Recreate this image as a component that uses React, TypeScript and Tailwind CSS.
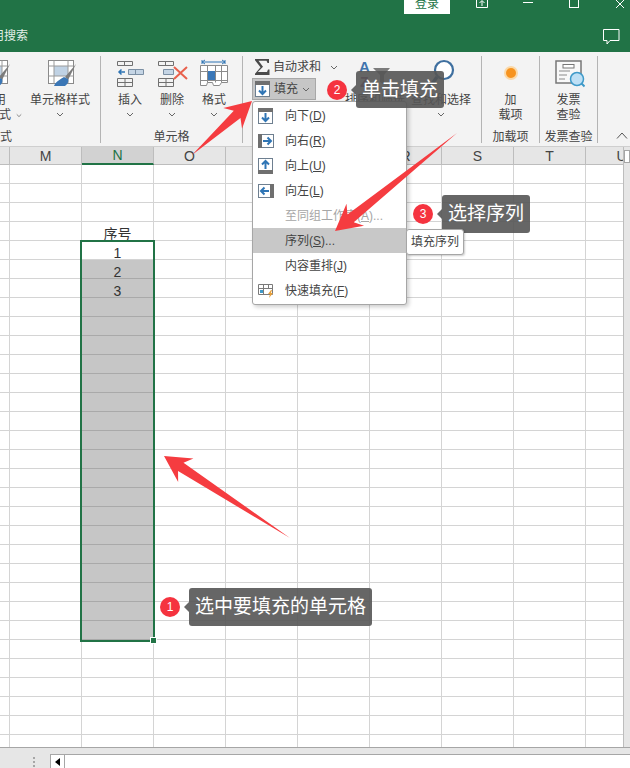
import React from 'react';

const columns = ['', 'M', 'N', 'O', 'P', 'Q', 'R', 'S', 'T', 'U'];
const rows = Array.from({ length: 31 }, (_, i) => i);

const cellText: Record<number, string> = { 3: '序号', 4: '1', 5: '2', 6: '3' };

const Chevron: React.FC = () => (
  <svg width="8" height="5" viewBox="0 0 8 5" fill="none" stroke="#666" strokeWidth="1">
    <path d="M1 1l3 3 3-3" />
  </svg>
);

const CellStyleIcon: React.FC = () => (
  <svg width="32" height="32" viewBox="0 0 32 32" className="shrink-0" fill="none">
    <rect x="4.5" y="2.5" width="25" height="23" fill="#fff" stroke="#8a8a8a" />
    <rect x="10" y="8" width="14" height="10" fill="#c0d2e4" />
    <path d="M4.5 8h25M4.5 18h25M10 2.5v23M24 2.5v23" stroke="#9a9a9a" />
    <path d="M32 6l-11 13 3 3z" fill="#7c7c7c" />
    <path d="M20 19c-3 2-8 4-10 9h11c3-2 4-5 3-7z" fill="#3a76b5" />
  </svg>
);

const InsertIcon: React.FC = () => (
  <svg width="32" height="32" viewBox="0 0 32 32" fill="none" stroke="#707070">
    <path d="M3.5 3.5h15v4h-15zM10.5 3.5v4M3.5 20.5h15v8h-15zM11 20.5v8M3.5 24.5h15" />
    <path d="M14.5 11.5h15v5h-15zM21.5 11.5v5" fill="#c5d5e5" stroke="#7b8fa3" />
    <path d="M11 14H5M7.500 11.500L5 14l2.500 2.500" stroke="#2f75b5" strokeWidth="1.500" />
  </svg>
);

const DeleteIcon: React.FC = () => (
  <svg width="32" height="32" viewBox="0 0 32 32" fill="none" stroke="#707070">
    <path d="M2.500 3.500h15v4h-15zM9.500 3.500v4M2.500 20.500h15v8h-15zM10 20.500v8M2.500 24.500h15" />
    <path d="M7.500 11.500h10v5h-10z" fill="#c5d5e5" stroke="#7b8fa3" />
    <path d="M18 9l13 12M31 9L18 21" stroke="#e8604c" strokeWidth="2" />
  </svg>
);

const FormatIcon: React.FC = () => (
  <svg width="32" height="32" viewBox="0 0 32 32" fill="none" stroke="#8a8a8a">
    <path d="M4 4h23M4 2v4M27 2v4" stroke="#2f75b5" />
    <path d="M7 2l-3 2 3 2M24 2l3 2-3 2" stroke="#2f75b5" />
    <path d="M2.500 7.500h27v17h-6l-2 3h-6l-1-3h-5l-1 3h-6z" fill="#fff" />
    <path d="M2.500 13.500h27M2.500 22.500h27M9.500 7.500v17M17.500 7.500v17M23.500 7.500v17" />
    <rect x="10" y="13" width="7" height="9" fill="#3b78b8" stroke="none" />
  </svg>
);

const SigmaIcon: React.FC = () => (
  <svg width="16" height="16" viewBox="0 0 16 16" fill="#4a4a4a">
    <path d="M1 0h14v4h-1.500l-1-2.300H4.500L9 7.800 3.800 13H13l1-2.500h1.500V16H1v-1.200L6.500 8.200 1 1.200z" />
  </svg>
);

const FillDownIcon: React.FC = () => (
  <svg width="16" height="16" viewBox="0 0 16 16" fill="none" className="shrink-0">
    <rect x="0.500" y="0.500" width="14" height="15" fill="#fff" stroke="#6e7f90" />
    <rect x="0" y="0" width="15" height="4" fill="#6f6f6f" />
    <path d="M7.500 5v8M4 9.500L7.500 13 11 9.500" stroke="#2f75b5" strokeWidth="2" />
  </svg>
);

const FillRightIcon: React.FC = () => (
  <svg width="16" height="16" viewBox="0 0 16 16" fill="none">
    <rect x="0.500" y="1.500" width="15" height="13" fill="#fff" stroke="#6e7f90" />
    <rect x="0" y="1" width="4" height="14" fill="#6f6f6f" />
    <path d="M5 8h8M9.500 4.500L13 8l-3.500 3.500" stroke="#2f75b5" strokeWidth="2" />
  </svg>
);

const FillUpIcon: React.FC = () => (
  <svg width="16" height="16" viewBox="0 0 16 16" fill="none">
    <rect x="0.500" y="0.500" width="14" height="15" fill="#fff" stroke="#6e7f90" />
    <rect x="0" y="12" width="15" height="4" fill="#6f6f6f" />
    <path d="M7.500 11V3M4 6.500L7.500 3 11 6.500" stroke="#2f75b5" strokeWidth="2" />
  </svg>
);

const FillLeftIcon: React.FC = () => (
  <svg width="16" height="16" viewBox="0 0 16 16" fill="none">
    <rect x="0.500" y="1.500" width="15" height="13" fill="#fff" stroke="#6e7f90" />
    <rect x="12" y="1" width="4" height="14" fill="#6f6f6f" />
    <path d="M11 8H3M6.500 4.500L3 8l3.500 3.500" stroke="#2f75b5" strokeWidth="2" />
  </svg>
);

const FlashFillIcon: React.FC = () => (
  <svg width="16" height="16" viewBox="0 0 16 16" fill="none" stroke="#7a7a7a">
    <path d="M0.500 1.500h14v10h-14zM0.500 5.500h14M5.500 1.500v10M10.500 1.500v4" />
    <rect x="2" y="7" width="3" height="3" fill="#3f9ac9" stroke="none" />
    <path d="M13 7l-3 4h2l-1 4 4-5h-2l1-3z" fill="#e9a13b" stroke="none" />
  </svg>
);

const SortIcon: React.FC = () => (
  <svg width="32" height="32" viewBox="0 0 32 32" className="shrink-0">
    <text x="0" y="14" fontSize="15" fontWeight="700" fill="#3f74ad" fontFamily="Liberation Sans">A</text>
    <text x="1" y="29" fontSize="14" fontWeight="700" fill="#7a3b6f" fontFamily="Liberation Sans">Z</text>
    <path d="M14 10h17l-6 7v9l-4-2v-7z" fill="#7b7b7b" />
  </svg>
);

const SearchIcon: React.FC = () => (
  <svg width="32" height="32" viewBox="0 0 32 32" fill="none" className="shrink-0">
    <circle cx="19" cy="12" r="9" fill="#fff" stroke="#3e6f9f" strokeWidth="2.200" />
    <path d="M12 19L4 30" stroke="#2b5c8f" strokeWidth="3.500" />
  </svg>
);

const InvoiceIcon: React.FC = () => (
  <svg width="32" height="32" viewBox="0 0 32 32" fill="none" className="shrink-0">
    <rect x="3" y="3" width="25" height="22" fill="#f8f8f8" stroke="#777" strokeWidth="1.500" />
    <rect x="10" y="6.500" width="11" height="3.500" fill="#fff" stroke="#777" />
    <path d="M6 13h11M6 17h8M6 21h6" stroke="#8a8a8a" />
    <circle cx="24" cy="21" r="6.500" fill="#bfe0f5" stroke="#3f9ac9" strokeWidth="1.500" />
    <path d="M28.500 25.500l3 3" stroke="#3f9ac9" strokeWidth="2" />
  </svg>
);

const RibbonButton: React.FC<{ icon: React.ReactNode; lines: string[]; chevron?: boolean }> = ({ icon, lines, chevron }) => (
  <div className="flex flex-col items-center">
    <div className="h-[32px] flex items-center justify-center">{icon}</div>
    <div className="mt-[3px] text-center whitespace-nowrap text-xs leading-[15px]">
      {lines.map((line) => (
        <div key={line}>{line}</div>
      ))}
    </div>
    {chevron && (
      <div className="h-[13px] flex items-center">
        <Chevron />
      </div>
    )}
  </div>
);

const RibbonGroup: React.FC<{ label: string; className: string; labelClass?: string; children: React.ReactNode }> = ({
  label,
  className,
  labelClass = 'text-center',
  children,
}) => (
  <div className={`shrink-0 h-[87px] pt-[2px] flex flex-col border-r border-[#b4b4b4] ${className}`}>
    <div className="flex-1 flex">{children}</div>
    <div className={`text-xs leading-[12px] whitespace-nowrap ${labelClass}`}>{label}</div>
  </div>
);

interface MenuEntry {
  icon?: React.ReactNode;
  before: string;
  hotkey: string;
  after?: string;
  disabled?: boolean;
  active?: boolean;
}

const menuItems: MenuEntry[] = [
  { icon: <FillDownIcon />, before: '向下(', hotkey: 'D', after: ')' },
  { icon: <FillRightIcon />, before: '向右(', hotkey: 'R', after: ')' },
  { icon: <FillUpIcon />, before: '向上(', hotkey: 'U', after: ')' },
  { icon: <FillLeftIcon />, before: '向左(', hotkey: 'L', after: ')' },
  { before: '至同组工作表(', hotkey: 'A', after: ')...', disabled: true },
  { before: '序列(', hotkey: 'S', after: ')...', active: true },
  { before: '内容重排(', hotkey: 'J', after: ')' },
  { icon: <FlashFillIcon />, before: '快速填充(', hotkey: 'F', after: ')' },
];

const Callout: React.FC<{ n: number; text: string; className: string }> = ({ n, text, className }) => (
  <div className={`absolute flex items-center ${className}`}>
    <div className="w-[20px] h-[20px] rounded-full bg-[#f5333f] text-white text-xs flex items-center justify-center">{n}</div>
    <div className="ml-[4px] w-0 h-0 border-y-[5px] border-r-[5px] border-y-transparent border-r-[#555555]/90" />
    <div className="h-full px-[6px] rounded-[3px] bg-[#555555]/90 text-white text-[19px] leading-[37px] whitespace-nowrap">{text}</div>
  </div>
);

// tapered red arrow, tail -> tip
const arrowPoints = (tx: number, ty: number, x: number, y: number) => {
  const len = Math.hypot(x - tx, y - ty);
  const ux = (x - tx) / len;
  const uy = (y - ty) / len;
  const at = (back: number, side: number) => `${x - ux * back - uy * side},${y - uy * back + ux * side}`;
  return [at(0, 0), at(26, 14), at(20, 5), `${tx},${ty}`, at(20, -5), at(26, -14)].join(' ');
};

export default function App() {
  return (
    <div className="relative w-[630px] h-[768px] overflow-hidden flex flex-col bg-white text-[#444] font-['Liberation_Sans','Noto_Sans_CJK_SC',sans-serif]">
      {/* title bar */}
      <div className="h-[52px] shrink-0 bg-[#217346] text-white overflow-hidden">
        <div className="h-[23px] flex justify-end -mr-[13px]">
          <div className="w-[46px] h-[14px] mr-[9px] bg-white text-[#217346] text-xs leading-[8px] text-center overflow-hidden">登录</div>
          <div className="w-[46px] flex justify-center">
            <svg width="14" height="8" viewBox="0 0 14 8" fill="none" stroke="#fff">
              <path d="M1.500 0v7.500h11V0M7 6V1M4.500 3L7 .5 9.500 3" />
            </svg>
          </div>
          <div className="w-[46px] flex justify-center">
            <div className="w-[10px] h-[1px] mt-[2px] bg-white" />
          </div>
          <div className="w-[46px] flex justify-center">
            <div className="w-[10px] h-[8px] border-x border-b border-white" />
          </div>
          <div className="w-[46px] flex justify-center">
            <svg width="11" height="8" viewBox="0 0 11 8" fill="none" stroke="#fff">
              <path d="M1 0l8 8M9 0L1 8" />
            </svg>
          </div>
        </div>
        <div className="flex items-center justify-between h-[27px] pr-[10px]">
          <span className="-ml-[8px] text-xs leading-[27px] text-[#e4efe9]">用搜索</span>
          <svg width="17" height="16" viewBox="0 0 17 16" fill="none" stroke="#fff">
            <path d="M.5.500h15.500v11H7L4 15v-3.500H.5z" />
          </svg>
        </div>
      </div>

      {/* ribbon */}
      <div className="h-[95px] shrink-0 pt-[4px] flex bg-[#f3f3f3] border-b border-[#cfcfcf]">
        <RibbonGroup label="样式" className="w-[101px] overflow-hidden" labelClass="-ml-[12px]">
          <div className="w-[22px] overflow-hidden flex flex-col">
            <div className="h-[32px] -ml-[22px]">
              <CellStyleIcon />
            </div>
            <div className="mt-[3px] -ml-[6px] text-xs leading-[15px]">用</div>
            <div className="-ml-[1px] flex items-center gap-[5px] text-xs leading-[15px]">
              式<Chevron />
            </div>
          </div>
          <div className="w-[76px]">
            <RibbonButton icon={<CellStyleIcon />} lines={['单元格样式']} chevron />
          </div>
        </RibbonGroup>

        <RibbonGroup label="单元格" className="w-[142px]">
          <div className="pl-[8px] flex">
            <div className="w-[42px]">
              <RibbonButton icon={<InsertIcon />} lines={['插入']} chevron />
            </div>
            <div className="w-[42px]">
              <RibbonButton icon={<DeleteIcon />} lines={['删除']} chevron />
            </div>
            <div className="w-[42px]">
              <RibbonButton icon={<FormatIcon />} lines={['格式']} chevron />
            </div>
          </div>
        </RibbonGroup>

        <RibbonGroup label="" className="w-[239px]">
          <div className="w-[102px] flex flex-col">
            <div className="h-[18px] pl-[11px] flex items-center text-xs">
              <SigmaIcon />
              <span className="ml-[3px]">自动求和</span>
              <span className="ml-[9px]">
                <Chevron />
              </span>
            </div>
            <div className="ml-[9px] mt-[2px] w-[64px] h-[22px] pl-[2px] flex items-center text-xs bg-[#c6c6c6] border border-[#a8a8a8]">
              <FillDownIcon />
              <span className="ml-[3px]">填充</span>
              <span className="ml-[4px]">
                <Chevron />
              </span>
            </div>
          </div>
          <div className="w-[60px]">
            <RibbonButton icon={<SortIcon />} lines={['排序和筛选']} chevron />
          </div>
          <div className="ml-[6px] w-[60px]">
            <RibbonButton icon={<SearchIcon />} lines={['查找和选择']} chevron />
          </div>
        </RibbonGroup>

        <RibbonGroup label="加载项" className="w-[58px]">
          <div className="w-full">
            <RibbonButton
              icon={<div className="w-[10px] h-[10px] -mt-[2px] rounded-full bg-[#f7931e] ring-2 ring-[#fbd9a8]" />}
              lines={['加', '载项']}
            />
          </div>
        </RibbonGroup>

        <RibbonGroup label="发票查验" className="w-[58px]">
          <div className="w-full">
            <RibbonButton icon={<InvoiceIcon />} lines={['发票', '查验']} />
          </div>
        </RibbonGroup>

        <div className="flex-1 flex items-end justify-end pb-[7px] pr-[2px]">
          <svg width="12" height="7" viewBox="0 0 12 7" fill="none" stroke="#555">
            <path d="M1 6.500l5-5.500 5 5.500" />
          </svg>
        </div>
      </div>

      {/* sheet */}
      <div className="flex-1 flex min-h-0">
        <div className="flex-1 min-w-0 overflow-hidden">
          <div className="h-[18px] flex bg-[#e6e6e6] text-sm">
            {columns.map((col, i) => (
              <div
                key={col || 'corner'}
                className={`shrink-0 flex items-center justify-center border-r border-b border-[#bdbdbd] ${i === 0 ? 'w-[10px]' : 'w-[72px]'} ${
                  col === 'N' ? 'bg-[#d2d2d2] text-[#217346] border-b-2 border-b-[#217346]' : ''
                }`}
              >
                {col}
              </div>
            ))}
          </div>
          {rows.map((row) => (
            <div key={row} className="h-[19px] flex">
              {columns.map((col, i) => {
                const picked = col === 'N' && row >= 5 && row <= 24;
                return (
                  <div
                    key={col || 'corner'}
                    className={`shrink-0 border-r border-b flex items-end justify-center text-sm leading-[12px] text-[#333] ${
                      i === 0 ? 'w-[10px]' : 'w-[72px]'
                    } ${picked ? 'bg-[#c6c6c6] border-[#a9a9a9]' : 'border-[#d4d4d4]'}`}
                  >
                    {col === 'N' ? cellText[row] : null}
                  </div>
                );
              })}
            </div>
          ))}
        </div>
        <div className="w-[7px] shrink-0 bg-[#e6e6e6] border-l border-[#bdbdbd] pt-[3px]">
          <div className="h-[13px] bg-white border border-[#a6a6a6]" />
        </div>
      </div>

      {/* bottom scroll strip */}
      <div className="h-[21px] shrink-0 flex bg-[#e6e6e6] border-t border-[#a6a6a6]">
        <div className="w-[50px] flex justify-end items-end pr-[15px] pb-[1px]">
          <div className="flex flex-col gap-[2px]">
            <div className="w-[2px] h-[2px] bg-[#a6a6a6]" />
            <div className="w-[2px] h-[2px] bg-[#a6a6a6]" />
            <div className="w-[2px] h-[2px] bg-[#a6a6a6]" />
          </div>
        </div>
        <div className="flex-1 mt-[6px] flex bg-white border-t border-[#a6a6a6]">
          <div className="w-[15px] flex items-center justify-center border-x border-[#a6a6a6]">
            <div className="w-0 h-0 border-y-[4px] border-r-[5px] border-y-transparent border-r-black" />
          </div>
        </div>
      </div>

      {/* selection frame */}
      <div className="absolute left-[80px] top-[240px] w-[75px] h-[402px] border-2 border-[#217346]">
        <div className="absolute -right-[3px] -bottom-[3px] w-[5px] h-[5px] bg-[#217346] outline outline-1 outline-white" />
      </div>

      {/* fill dropdown */}
      <div className="absolute left-[252px] top-[101px] w-[155px] py-[1px] bg-white border border-[#a6a6a6] rounded-[3px] shadow-[2px_2px_4px_rgba(0,0,0,0.2)] text-xs">
        {menuItems.map((item) => (
          <div key={item.before} className={`h-[25px] flex items-center ${item.active ? 'bg-[#c8c8c8]' : ''}`}>
            <div className="w-[32px] pl-[5px] shrink-0">{item.icon}</div>
            <span className={item.disabled ? 'text-[#a6a6a6]' : ''}>
              {item.before}
              <u>{item.hotkey}</u>
              {item.after}
            </span>
          </div>
        ))}
      </div>

      <Callout n={2} text="单击填充" className="left-[327px] top-[71px] h-[37px]" />
      <Callout n={3} text="选择序列" className="left-[413px] top-[195px] h-[38px]" />
      <Callout n={1} text="选中要填充的单元格" className="left-[160px] top-[588px] h-[38px]" />

      <div className="absolute left-[406px] top-[229px] h-[26px] px-[4px] bg-white border border-[#a6a6a6] rounded-[3px] shadow-[1px_1px_2px_rgba(0,0,0,0.2)] text-xs leading-[24px]">
        填充序列
      </div>

      {/* red annotation arrows */}
      <svg className="absolute inset-0 pointer-events-none" width="630" height="768" fill="#f53c40">
        <polygon points={arrowPoints(290, 538, 164, 456)} />
        <polygon points={arrowPoints(192, 155, 252, 101)} />
        <polygon points={arrowPoints(457, 133, 335, 231)} />
      </svg>
    </div>
  );
}
